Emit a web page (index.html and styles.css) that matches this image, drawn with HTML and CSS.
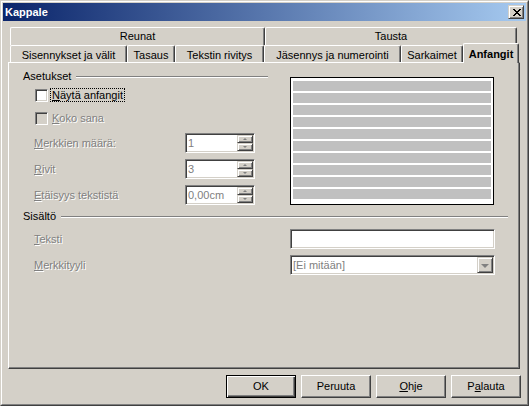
FILE: index.html
```html
<!DOCTYPE html>
<html>
<head>
<meta charset="utf-8">
<link rel="stylesheet" href="styles.css">
</head>
<body>
<div class="win">
  <div class="frame">
    <div class="caption">
      <span class="title">Kappale</span>
      <div class="close">
        <svg width="8" height="7" viewBox="0 0 8 7" shape-rendering="crispEdges">
          <rect x="0" y="0" width="2" height="1"/><rect x="6" y="0" width="2" height="1"/>
          <rect x="1" y="1" width="2" height="1"/><rect x="5" y="1" width="2" height="1"/>
          <rect x="2" y="2" width="4" height="1"/>
          <rect x="3" y="3" width="2" height="1"/>
          <rect x="2" y="4" width="4" height="1"/>
          <rect x="1" y="5" width="2" height="1"/><rect x="5" y="5" width="2" height="1"/>
          <rect x="0" y="6" width="2" height="1"/><rect x="6" y="6" width="2" height="1"/>
        </svg>
      </div>
    </div>
    <div class="client">
      <div class="tabctl">
        <div class="tabrow row1">
          <div class="tab t-reunat">Reunat</div>
          <div class="tab t-tausta">Tausta</div>
        </div>
        <div class="tabrow row2">
          <div class="tab t-sis">Sisennykset ja välit</div>
          <div class="tab t-tas">Tasaus</div>
          <div class="tab t-tek">Tekstin rivitys</div>
          <div class="tab t-jas">Jäsennys ja numerointi</div>
          <div class="tab t-sar">Sarkaimet</div>
          <div class="tab active">Anfangit</div>
        </div>
        <div class="panel">
          <div class="top">
            <div class="settings">
              <div class="group-head"><span>Asetukset</span><span class="etch"></span></div>
              <div class="cb-row first">
                <span class="check"></span>
                <span class="focus"><u>N</u>äytä anfangit</span>
              </div>
              <div class="cb-row second">
                <span class="check disabled"></span>
                <span class="cb-label dis"><u>K</u>oko sana</span>
              </div>
              <div class="spin-row">
                <span class="lbl dis"><u>M</u>erkkien määrä:</span>
                <div class="spin">
                  <span class="val">1</span>
                  <span class="spin-btns"><span class="sb up"></span><span class="sb down"></span></span>
                </div>
              </div>
              <div class="spin-row">
                <span class="lbl dis"><u>R</u>ivit</span>
                <div class="spin">
                  <span class="val">3</span>
                  <span class="spin-btns"><span class="sb up"></span><span class="sb down"></span></span>
                </div>
              </div>
              <div class="spin-row">
                <span class="lbl dis"><u>E</u>täisyys tekstistä</span>
                <div class="spin">
                  <span class="val">0,00cm</span>
                  <span class="spin-btns"><span class="sb up"></span><span class="sb down"></span></span>
                </div>
              </div>
            </div>
            <div class="preview">
              <div class="bar"></div><div class="bar"></div><div class="bar"></div><div class="bar"></div><div class="bar"></div>
              <div class="bar"></div><div class="bar"></div><div class="bar"></div><div class="bar"></div><div class="bar"></div>
            </div>
          </div>
          <div class="group-head content-head"><span>Sisältö</span><span class="etch"></span></div>
          <div class="field-row">
            <span class="lbl2 dis"><u>T</u>eksti</span>
            <div class="textbox"></div>
          </div>
          <div class="field-row">
            <span class="lbl2 dis"><u>M</u>erkkityyli</span>
            <div class="combo">
              <span class="val">[Ei mitään]</span>
              <span class="drop"></span>
            </div>
          </div>
        </div>
      </div>
      <div class="buttons">
        <div class="btn default">OK</div>
        <div class="btn">Peruuta</div>
        <div class="btn"><u>O</u>hje</div>
        <div class="btn">P<u>a</u>lauta</div>
      </div>
    </div>
  </div>
</div>
</body>
</html>
```

FILE: styles.css
```css
* { box-sizing: border-box; }
html, body { margin: 0; padding: 0; }
body {
  width: 529px; height: 406px; overflow: hidden;
  font-family: "Liberation Sans", Arial, sans-serif;
  font-size: 11px; color: #000; background: #d4d0c8;
}
u { text-decoration: underline; text-underline-offset: 1px; }

.win {
  width: 529px; height: 406px;
  border: 1px solid; border-color: #d4d0c8 #404040 #404040 #d4d0c8;
}
.frame {
  height: 100%;
  border: 1px solid; border-color: #fff #808080 #808080 #fff;
  padding: 1px; background: #d4d0c8;
  display: flex; flex-direction: column;
}
.caption {
  height: 18px; flex: none;
  display: flex; align-items: center; justify-content: space-between;
  padding: 0 2px 0 2px;
  background: linear-gradient(to right, #0a246a, #a6caf0);
}
.title { color: #fff; font-weight: bold; line-height: 13px; }
.close {
  width: 16px; height: 14px;
  background: #d4d0c8;
  border: 1px solid; border-color: #d4d0c8 #404040 #404040 #d4d0c8;
  box-shadow: inset 1px 1px #fff, inset -1px -1px #808080;
  display: flex; align-items: center; justify-content: center;
  padding-left: 1px;
}
.close svg { display: block; fill: #000; }

.client { flex: 1; display: flex; flex-direction: column; padding: 6px 0 0 5px; }
.tabctl { width: 512px; }
.tabrow { display: flex; padding-left: 2px; }
.row1 { height: 18px; }
.row2 { height: 17px; align-items: flex-start; }
.tab {
  height: 100%;
  border-top: 1px solid #fff; border-left: 1px solid #fff; border-right: 1px solid #404040;
  box-shadow: inset -1px 0 #808080;
  border-radius: 2px 2px 0 0;
  text-align: center; white-space: nowrap;
}
.row1 .tab { line-height: 17px; }
.row2 .tab { line-height: 16px; padding-top: 1px; }
.t-reunat { width: 255px; }
.t-tausta { width: 252px; }
.t-sis { width: 117px; }
.t-tas { width: 48px; }
.t-tek { width: 89px; }
.t-jas { width: 137px; }
.t-sar { width: 62px; }
.row2 .tab.active {
  width: 56px; height: 20px; margin-top: -2px;
  position: relative; z-index: 1;
  background: #d4d0c8; font-weight: bold;
  padding-top: 2px; line-height: 16px;
}

.panel {
  width: 512px; height: 307px;
  border: 1px solid; border-color: #fff #404040 #404040 #fff;
  box-shadow: inset -1px -1px #808080;
  padding: 7px 11px 0 14px;
}
.top { display: flex; align-items: flex-start; }
.settings { width: 245px; }
.group-head { display: flex; align-items: center; height: 13px; line-height: 13px; }
.etch { flex: 1; height: 2px; margin-left: 5px; border-top: 1px solid #808080; border-bottom: 1px solid #fff; }
.dis { color: #808080; text-shadow: 1px 1px 0 #fff; }

.cb-row { display: flex; align-items: center; height: 14px; padding-left: 12px; }
.cb-row.first { margin-top: 5px; }
.cb-row.second { margin-top: 9px; }
.check {
  width: 13px; height: 13px; flex: none; background: #fff;
  border: 1px solid; border-color: #808080 #fff #fff #808080;
  box-shadow: inset 1px 1px #404040, inset -1px -1px #d4d0c8;
}
.check.disabled { background: #d4d0c8; }
.focus { margin-left: 2px; border: 1px dotted #000; padding: 0 1px; line-height: 12px; }
.cb-label { margin-left: 4px; line-height: 13px; }

.spin-row { display: flex; align-items: center; height: 20px; margin-top: 6px; padding-left: 11px; }
.cb-row.second + .spin-row { margin-top: 8px; }
.lbl { width: 151px; }
.spin, .textbox, .combo {
  height: 20px; background: #fff;
  border: 1px solid; border-color: #808080 #fff #fff #808080;
  box-shadow: inset 1px 1px #404040, inset -1px -1px #d4d0c8;
  padding: 1px; display: flex;
}
.spin { width: 70px; }
.val { flex: 1; color: #808080; line-height: 16px; padding-left: 1px; }
.spin-btns { width: 16px; display: flex; flex-direction: column; }
.sb, .drop {
  background: #d4d0c8;
  border: 1px solid; border-color: #d4d0c8 #404040 #404040 #d4d0c8;
  box-shadow: inset 1px 1px #fff, inset -1px -1px #808080;
  display: flex; align-items: center; justify-content: center;
}
.sb { height: 8px; }
.sb::after { content: ""; width: 0; height: 0; border-left: 2px solid transparent; border-right: 2px solid transparent; }
.sb.up::after { border-bottom: 2px solid #808080; }
.sb.down::after { border-top: 2px solid #808080; }

.preview {
  width: 204px; height: 128px; margin: 7px 0 0 22px;
  border: 1px solid #000; background: #fff;
  padding: 3px 2px;
}
.bar { height: 10px; background: #c0c0c0; margin-bottom: 2px; }

.content-head { margin-top: 5px; }
.field-row { display: flex; align-items: center; height: 20px; margin-top: 6px; padding-left: 11px; }
.lbl2 { width: 256px; }
.textbox, .combo { width: 205px; }
.drop { width: 16px; height: 16px; }
.drop::after { content: ""; width: 0; height: 0; border-left: 4px solid transparent; border-right: 4px solid transparent; border-top: 4px solid #808080; margin-top: 1px; }

.buttons { display: flex; justify-content: flex-end; gap: 5px; margin-top: 6px; padding-right: 5px; }
.btn {
  width: 70px; height: 23px;
  border: 1px solid; border-color: #fff #404040 #404040 #fff;
  box-shadow: inset -1px -1px #808080;
  text-align: center; line-height: 20px;
}
.btn.default {
  border-color: #000;
  box-shadow: inset 1px 1px #fff, inset -1px -1px #404040, inset -2px -2px #808080;
}
```
